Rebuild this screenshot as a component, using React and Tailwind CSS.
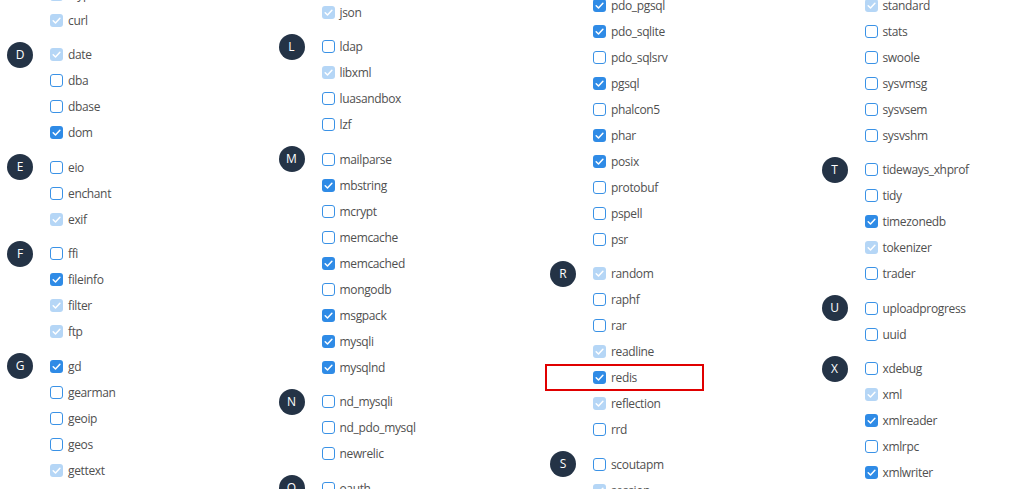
const L = "light";
const C = "checked";
const U = "unchecked";

const columns = [
  {
    offset: "mt-[-19px]",
    groups: [
      { letter: null, items: [["ctype", L], ["curl", L]] },
      { letter: "D", items: [["date", L], ["dba", U], ["dbase", U], ["dom", C]] },
      { letter: "E", items: [["eio", U], ["enchant", U], ["exif", L]] },
      { letter: "F", items: [["ffi", U], ["fileinfo", C], ["filter", L], ["ftp", L]] },
      { letter: "G", items: [["gd", C], ["gearman", U], ["geoip", U], ["geos", U], ["gettext", L]] },
    ],
  },
  {
    offset: "mt-[-1px]",
    groups: [
      { letter: null, items: [["json", L]] },
      { letter: "L", items: [["ldap", U], ["libxml", L], ["luasandbox", U], ["lzf", U]] },
      {
        letter: "M",
        items: [
          ["mailparse", U],
          ["mbstring", C],
          ["mcrypt", U],
          ["memcache", U],
          ["memcached", C],
          ["mongodb", U],
          ["msgpack", C],
          ["mysqli", C],
          ["mysqlnd", C],
        ],
      },
      { letter: "N", items: [["nd_mysqli", U], ["nd_pdo_mysql", U], ["newrelic", U]] },
      { letter: "O", items: [["oauth", U]] },
    ],
  },
  {
    offset: "mt-[-8px]",
    groups: [
      {
        letter: null,
        items: [
          ["pdo_pgsql", C],
          ["pdo_sqlite", C],
          ["pdo_sqlsrv", U],
          ["pgsql", C],
          ["phalcon5", U],
          ["phar", C],
          ["posix", C],
          ["protobuf", U],
          ["pspell", U],
          ["psr", U],
        ],
      },
      {
        letter: "R",
        items: [
          ["random", L],
          ["raphf", U],
          ["rar", U],
          ["readline", L],
          ["redis", C, true],
          ["reflection", L],
          ["rrd", U],
        ],
      },
      { letter: "S", items: [["scoutapm", U], ["session", L]] },
    ],
  },
  {
    offset: "mt-[-8px]",
    groups: [
      {
        letter: null,
        items: [["standard", L], ["stats", U], ["swoole", U], ["sysvmsg", U], ["sysvsem", U], ["sysvshm", U]],
      },
      {
        letter: "T",
        items: [["tideways_xhprof", U], ["tidy", U], ["timezonedb", C], ["tokenizer", L], ["trader", U]],
      },
      { letter: "U", items: [["uploadprogress", U], ["uuid", U]] },
      { letter: "X", items: [["xdebug", U], ["xml", L], ["xmlreader", C], ["xmlrpc", U], ["xmlwriter", C]] },
    ],
  },
];

function Box({ state }) {
  if (state === U) {
    return <span className="h-[13px] w-[13px] shrink-0 rounded-[3px] border-[1.5px] border-[#3a92e6] bg-white" />;
  }
  const bg = state === C ? "bg-[#2f8be6]" : "bg-[#b5d6f6]";
  return (
    <span className={`flex h-[13px] w-[13px] shrink-0 items-center justify-center rounded-[3px] ${bg}`}>
      <svg width="13" height="13" viewBox="0 0 13 13" fill="none">
        <path d="M3.2 6.8 L5.5 9 L9.9 4.2" stroke="white" strokeWidth="1.5" strokeLinecap="round" strokeLinejoin="round" />
      </svg>
    </span>
  );
}

function Row({ name, state, marked }) {
  return (
    <div className="relative flex h-[26px] items-center gap-[5px]">
      <Box state={state} />
      <span className="pt-px text-[12px] leading-none tracking-[-0.35px] text-[#505050] [font-variant-ligatures:none]">
        {name}
      </span>
      {marked ? (
        <div className="absolute left-[-48px] top-[-1px] h-[27px] w-[159px] border-2 border-[#e00000]" />
      ) : null}
    </div>
  );
}

export default function App() {
  return (
    <div className="h-[489px] w-[1024px] overflow-hidden bg-white font-['Open_Sans',sans-serif]">
      <div className="flex">
        {columns.map((col, ci) => (
          <div key={ci} className={`flex w-[271.5px] shrink-0 flex-col gap-[8.5px] ${col.offset}`}>
            {col.groups.map((group, gi) => (
              <div key={gi} className="flex">
                <div className="w-[50px] shrink-0 pl-[7px]">
                  {group.letter ? (
                    <div className="flex h-[26px] w-[26px] items-center justify-center rounded-full bg-[#243346] text-[12px] font-medium text-white">
                      {group.letter}
                    </div>
                  ) : null}
                </div>
                <div className="flex flex-col">
                  {group.items.map(([name, state, marked]) => (
                    <Row key={name} name={name} state={state} marked={marked} />
                  ))}
                </div>
              </div>
            ))}
          </div>
        ))}
      </div>
    </div>
  );
}
